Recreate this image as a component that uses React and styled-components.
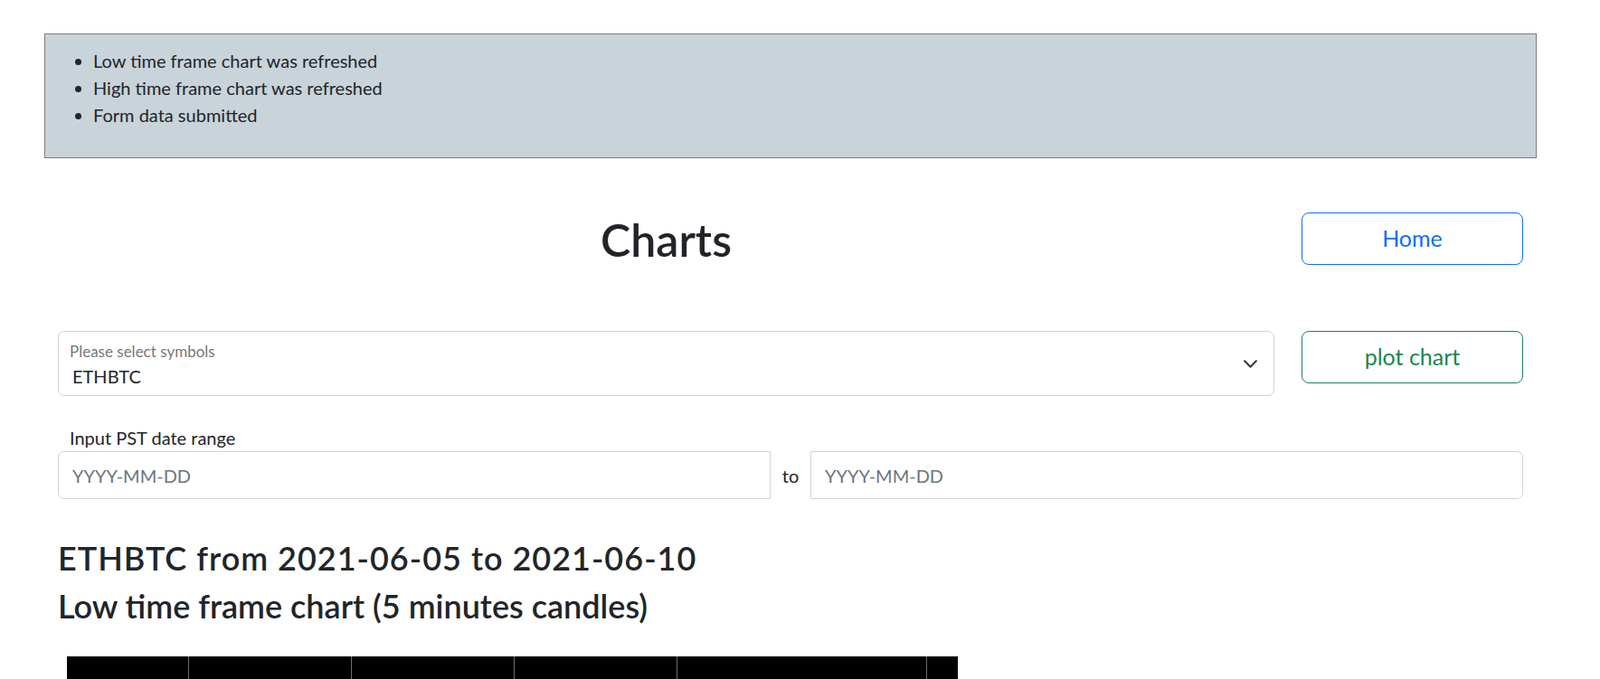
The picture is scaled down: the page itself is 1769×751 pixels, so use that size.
import styled, { createGlobalStyle } from "styled-components";

const GlobalStyle = createGlobalStyle`
  body {
    margin: 0;
    background: #fff;
    color: #212529;
    font-family: Lato, "Noto Sans", sans-serif;
    font-size: 20px;
    line-height: 1.5;
  }

  * {
    box-sizing: border-box;
  }
`;

const Container = styled.div`
  width: 1650px;
  margin-left: 49px;
  padding-top: 37px;
`;

const Alert = styled.div`
  background-color: #c9d3da;
  border: 1px solid #7d7d7d;
  padding: 14px 20px 12px;
  margin-bottom: 60px;

  ul {
    margin: 0 0 20px;
    padding-left: 33px;
  }
`;

const Row = styled.div`
  display: grid;
  grid-template-columns: 1fr 245px;
  column-gap: 30px;
  align-items: start;
  padding: 0 15px;
  margin-bottom: ${(p) => p.$gap || 0}px;
`;

const Title = styled.h1`
  margin: 0;
  text-align: center;
  font-size: 50px;
  font-weight: 600;
  line-height: 60px;
`;

const OutlineButton = styled.button`
  width: 100%;
  height: 58px;
  background: #fff;
  border: 1px solid ${(p) => p.$color};
  color: ${(p) => p.$color};
  border-radius: 8px;
  font-family: inherit;
  font-size: 25px;
  line-height: 1.5;
  cursor: pointer;
`;

const Floating = styled.div`
  position: relative;
  height: 72px;
`;

const Select = styled.select`
  appearance: none;
  width: 100%;
  height: 72px;
  padding: 34px 45px 6px 15px;
  border: 1px solid #ced4da;
  border-radius: 7px;
  background: #fff;
  color: #212529;
  font-family: inherit;
  font-size: 20px;
`;

const FloatLabel = styled.label`
  position: absolute;
  top: 10px;
  left: 13px;
  font-size: 17px;
  line-height: 25px;
  color: rgba(33, 37, 41, 0.65);
  pointer-events: none;
`;

const Chevron = styled.svg`
  position: absolute;
  right: 18px;
  top: 30px;
  pointer-events: none;
`;

const DateSection = styled.div`
  padding: 0 15px;
  margin-bottom: 44px;
`;

const DateLabel = styled.label`
  display: block;
  padding-left: 13px;
  line-height: 30px;
`;

const InputGroup = styled.div`
  display: flex;
  align-items: stretch;
`;

const DateInput = styled.input`
  flex: 1;
  min-width: 0;
  height: 53px;
  padding: 0 15px;
  border: 1px solid #ced4da;
  border-radius: ${(p) => (p.$first ? "7px 0 0 7px" : "0 7px 7px 0")};
  font-family: inherit;
  font-size: 20px;
  color: #212529;

  &::placeholder {
    color: #6c757d;
  }
`;

const GroupText = styled.span`
  display: flex;
  align-items: center;
  justify-content: center;
  width: 44px;
  font-size: 20px;
`;

const Section = styled.div`
  padding: 0 15px;
`;

const Heading = styled.h3`
  margin: 0 0 ${(p) => p.$bottom}px;
  font-size: 36px;
  font-weight: 600;
  line-height: 42px;
  letter-spacing: ${(p) => p.$spacing || 0}px;
`;

const ChartBox = styled.div`
  margin-left: 10px;
  width: 985px;
  height: 420px;
  background: #000;
`;

const gridLines = [134, 314, 494, 674, 950];

const App = () => {
  return (
    <>
      <GlobalStyle />
      <Container>
        <Alert>
          <ul>
            <li>Low time frame chart was refreshed</li>
            <li>High time frame chart was refreshed</li>
            <li>Form data submitted</li>
          </ul>
        </Alert>

        <Row $gap={71}>
          <Title>Charts</Title>
          <OutlineButton $color="#0d6efd">Home</OutlineButton>
        </Row>

        <Row $gap={31}>
          <Floating>
            <Select defaultValue="ETHBTC">
              <option>ETHBTC</option>
              <option>BTCUSDT</option>
              <option>ETHUSDT</option>
            </Select>
            <FloatLabel>Please select symbols</FloatLabel>
            <Chevron width="17" height="13" viewBox="0 0 16 12">
              <path
                d="M2 3l6 6 6-6"
                fill="none"
                stroke="#343a40"
                strokeWidth="2"
                strokeLinecap="round"
                strokeLinejoin="round"
              />
            </Chevron>
          </Floating>
          <OutlineButton $color="#198754">plot chart</OutlineButton>
        </Row>

        <DateSection>
          <DateLabel>Input PST date range</DateLabel>
          <InputGroup>
            <DateInput $first placeholder="YYYY-MM-DD" />
            <GroupText>to</GroupText>
            <DateInput placeholder="YYYY-MM-DD" />
          </InputGroup>
        </DateSection>

        <Section>
          <Heading $bottom={11} $spacing={1}>
            ETHBTC from 2021-06-05 to 2021-06-10
          </Heading>
          <Heading $bottom={35}>Low time frame chart (5 minutes candles)</Heading>
          <ChartBox>
            <svg width="985" height="420">
              {gridLines.map((x) => (
                <line key={x} x1={x + 0.5} y1="0" x2={x + 0.5} y2="420" stroke="#6e6e6e" />
              ))}
            </svg>
          </ChartBox>
        </Section>
      </Container>
    </>
  );
};

export default App;
